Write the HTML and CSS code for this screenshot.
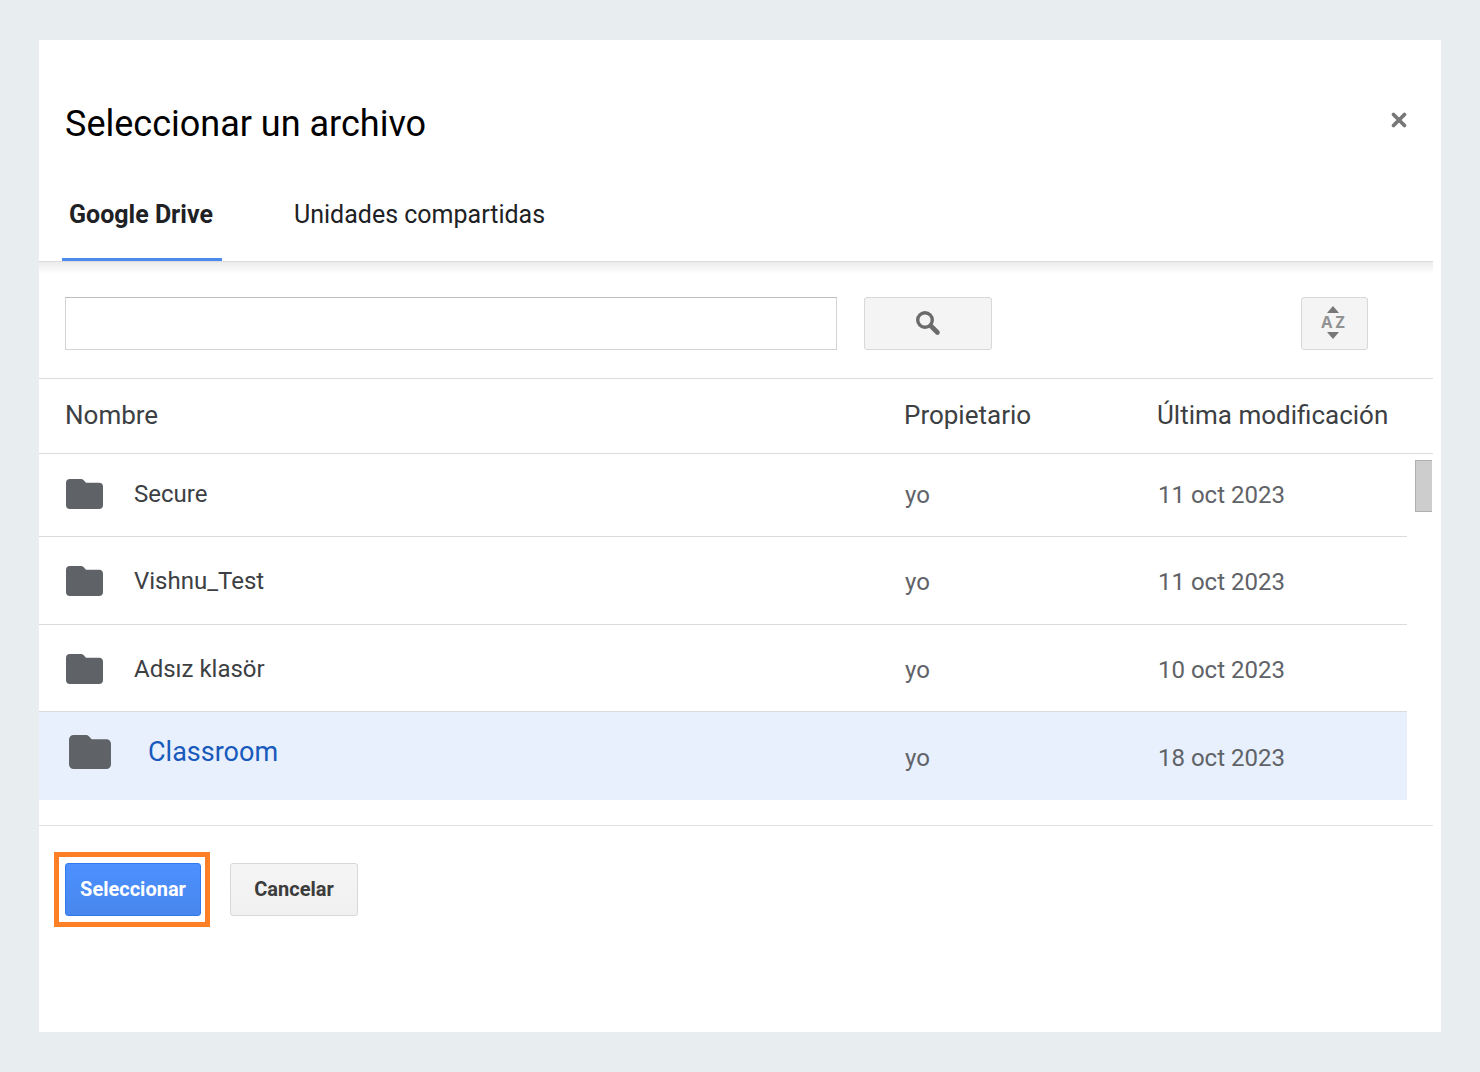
FILE: index.html
```html
<!DOCTYPE html>
<html lang="es">
<head>
<meta charset="utf-8">
<meta name="viewport" content="width=device-width, initial-scale=1">
<title>Seleccionar un archivo</title>
<link rel="stylesheet" href="styles.css">
</head>
<body>
<svg class="defs" aria-hidden="true">
  <symbol id="folder" viewBox="0 0 37 30"><path d="M4 0h11q1.500 0 2.500 1l2.500 2.700h13a4 4 0 0 1 4 4V26a4 4 0 0 1-4 4H4a4 4 0 0 1-4-4V4a4 4 0 0 1 4-4z"/></symbol>
</svg>
<main class="dialog" role="dialog" aria-labelledby="title">
  <header class="head">
    <div class="title-row">
      <h1 class="title" id="title">Seleccionar un archivo</h1>
      <button class="close" type="button" aria-label="Cerrar">
        <svg width="18" height="18" viewBox="0 0 18 18"><path d="M3.500 3.500l11 11M14.500 3.500l-11 11" stroke="#777" stroke-width="3.800" stroke-linecap="round"/></svg>
      </button>
    </div>
    <nav class="tabs">
      <a class="tab tab-active" href="#drive">Google Drive</a>
      <a class="tab" href="#shared">Unidades compartidas</a>
    </nav>
  </header>
  <form class="toolbar">
    <input class="search" type="text" aria-label="Buscar">
    <button class="btn search-btn" type="button" aria-label="Buscar">
      <svg width="26" height="26" viewBox="0 0 26 26" fill="none" stroke="#6b6b6b"><circle cx="10" cy="10" r="7.300" stroke-width="3.400"/><path d="M16 16l6.500 6.500" stroke-width="4.600" stroke-linecap="round"/></svg>
    </button>
    <button class="btn sort-btn" type="button" aria-label="Ordenar">
      <span class="arrow-up"></span>
      <span class="sort-label"><span>A</span><span>Z</span></span>
      <span class="arrow-down"></span>
    </button>
  </form>
  <table class="files">
    <colgroup><col><col class="col-owner"><col class="col-date"><col class="col-scroll"></colgroup>
    <thead>
      <tr><th scope="col">Nombre</th><th scope="col">Propietario</th><th scope="col" colspan="2">Última modificación</th></tr>
    </thead>
    <tbody>
      <tr>
        <td><div class="name"><svg class="folder"><use href="#folder"/></svg>Secure</div></td>
        <td>yo</td><td>11 oct 2023</td>
        <td class="scroll" rowspan="4"><div class="thumb"></div></td>
      </tr>
      <tr>
        <td><div class="name"><svg class="folder"><use href="#folder"/></svg>Vishnu_Test</div></td>
        <td>yo</td><td>11 oct 2023</td>
      </tr>
      <tr>
        <td><div class="name"><svg class="folder"><use href="#folder"/></svg>Adsız klasör</div></td>
        <td>yo</td><td>10 oct 2023</td>
      </tr>
      <tr class="selected">
        <td><div class="name"><svg class="folder"><use href="#folder"/></svg>Classroom</div></td>
        <td>yo</td><td>18 oct 2023</td>
      </tr>
    </tbody>
  </table>
  <footer class="actions">
    <div class="highlight"><button class="btn primary" type="button">Seleccionar</button></div>
    <button class="btn cancel" type="button">Cancelar</button>
  </footer>
</main>
</body>
</html>
```
FILE: styles.css
```css
* { box-sizing: border-box; }

body {
  margin: 0;
  padding: 40px 39px;
  min-height: 100vh;
  display: flex;
  background: #e8eeef;
  font-family: Roboto, "Liberation Sans", sans-serif;
  color: #202124;
}

.defs { position: absolute; width: 0; height: 0; }

.dialog {
  flex: 1;
  min-width: 0;
  padding-right: 8px;
  background: #fff;
}

.head {
  padding-top: 59px;
  border-bottom: 1px solid #dcdcdc;
}

.title-row {
  display: flex;
  justify-content: space-between;
  align-items: center;
  padding: 0 20px 0 26px;
}

.title {
  margin: 0;
  font-size: 36px;
  line-height: 50px;
  font-weight: 400;
  color: #000;
}

.close {
  display: flex;
  margin-bottom: 8px;
  padding: 5px;
  border: 0;
  background: none;
}

.tabs {
  display: flex;
  gap: 65px;
  padding: 42px 23px 0;
}

.tab {
  min-width: 160px;
  padding: 7px 7px 26px;
  border-bottom: 3px solid transparent;
  font-size: 25px;
  line-height: 34px;
  color: #202124;
  text-decoration: none;
}

.tab-active {
  border-color: #4d8af0;
  font-weight: 700;
}

.toolbar {
  display: flex;
  align-items: center;
  padding: 35px 65px 28px 26px;
  border-bottom: 1px solid #dcdcdc;
  background: linear-gradient(#ebebeb, #fff 12px);
}

.search {
  flex: 0 1 772px;
  min-width: 0;
  height: 53px;
  margin-right: 27px;
  padding: 0 12px;
  border: 1px solid #d4d4d4;
  border-top-color: #bcbcbc;
  font: inherit;
  font-size: 24px;
}

.btn {
  display: flex;
  flex: none;
  align-items: center;
  justify-content: center;
  height: 53px;
  padding: 0;
  border: 1px solid #d8d8d8;
  border-radius: 3px;
  background: #f4f4f4;
  font-family: inherit;
  font-size: 20px;
  font-weight: 700;
  color: #3c3c3c;
}

.search-btn { width: 128px; padding-bottom: 2px; }

.sort-btn {
  flex-direction: column;
  gap: 3px;
  width: 67px;
  margin-left: auto;
  padding: 0 3px 2px 0;
}

.sort-label {
  display: flex;
  gap: 3px;
  font: 700 16px/13px "Open Sans", sans-serif;
  color: #929292;
}

.arrow-up,
.arrow-down {
  border: 0 solid transparent;
  border-width: 0 6px;
}

.arrow-up { border-bottom: 7px solid #777; }
.arrow-down { border-top: 7px solid #777; }

.files {
  width: 100%;
  table-layout: fixed;
  border-collapse: separate;
  border-spacing: 0;
}

.col-owner { width: 253px; }
.col-date { width: 250px; }
.col-scroll { width: 26px; }

th {
  height: 75px;
  padding: 0 0 2px;
  border-bottom: 1px solid #dadce0;
  font-size: 26px;
  font-weight: 400;
  text-align: left;
  color: #3c4043;
}

td {
  height: 87px;
  padding: 3px 0 0 1px;
  border-bottom: 1px solid #dadce0;
  font-size: 24px;
  color: #5f6368;
}

tbody tr:first-child td {
  height: 83px;
  padding-top: 0;
}

tbody tr:nth-child(2) td { height: 88px; }

th:first-child,
td:first-child { padding-left: 26px; }

.name {
  display: flex;
  align-items: center;
  gap: 31px;
  padding: 0 0 2px 1px;
  color: #3c4043;
}

.folder {
  width: 37px;
  height: 30px;
  fill: #5f6368;
}

.selected td {
  height: 88px;
  border-bottom: 0;
  background: #e8f0fe;
}

.selected .name {
  gap: 37px;
  padding: 0 0 12px 4px;
  font-size: 27px;
  color: #185abc;
}

.selected .folder {
  width: 42px;
  height: 34px;
}

tbody tr:first-child td.scroll {
  padding: 6px 1px 0 8px;
  border: 0;
  vertical-align: top;
}

.thumb {
  height: 52px;
  border: 1px solid #b0b0b0;
  border-right: 0;
  background: #cdcdcd;
}

.actions {
  display: flex;
  align-items: center;
  gap: 20px;
  margin-top: 25px;
  padding: 26px 15px;
  border-top: 1px solid #e2e2e2;
}

.highlight {
  padding: 6px 4px 6px 6px;
  border: 5px solid #ff7f27;
}

.primary {
  width: 136px;
  border-color: #3079ed;
  background: linear-gradient(#4d90fe, #4787ed);
  color: #fff;
}

.cancel {
  width: 128px;
  background: linear-gradient(#f5f5f5, #f0f0f0);
}

.primary,
.cancel { padding-bottom: 2px; }
```
